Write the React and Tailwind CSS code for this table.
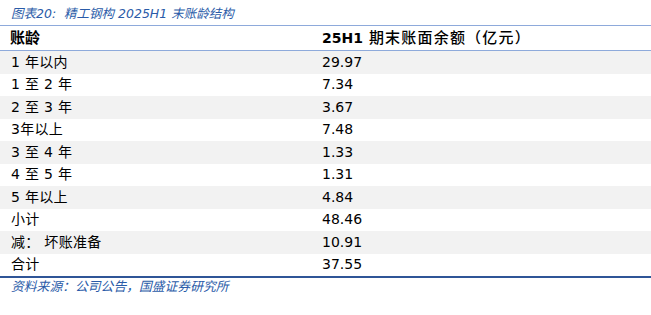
import React from 'react'

const rows = [
  ['1 年以内', '29.97'],
  ['1 至 2 年', '7.34'],
  ['2 至 3 年', '3.67'],
  ['3年以上', '7.48'],
  ['3 至 4 年', '1.33'],
  ['4 至 5 年', '1.31'],
  ['5 年以上', '4.84'],
  ['小计', '48.46'],
  ['减： 坏账准备', '10.91'],
  ['合计', '37.55'],
]

const font = { fontFamily: '"DejaVu Sans", "Noto Sans CJK SC", sans-serif' }

const App = () => {
  return (
    <div className="w-[651px] h-[315px] bg-white text-black" style={font}>
      <div className="h-[25px] pl-[11px] pt-[6px] text-[12.5px] leading-[15px] italic text-[#2a5ba8] whitespace-pre">
        图表20:  精工钢构 2025H1 末账龄结构
      </div>

      <div className="border-t-[1.5px] border-b-[1.5px] border-[#8eaadb] grid grid-cols-[311px_1fr] h-[26px] items-center text-[14px]">
        <div className="pl-[10px] font-bold text-[15px]">账龄</div>
        <div className="pl-[11px]">
          <span className="font-bold">25H1</span>
          <span className="font-medium text-[15px] tracking-[1.2px]"> 期末账面余额（亿元）</span>
        </div>
      </div>

      <div className="border-b-2 border-[#2f5597]">
        {rows.map(([label, value], i) => (
          <div
            key={label}
            className={`grid grid-cols-[311px_1fr] h-[22.5px] items-center text-[14px] ${
              i % 2 === 0 ? 'bg-[#f2f2f2]' : 'bg-white'
            }`}
          >
            <div className="pl-[11px] whitespace-pre tracking-[0.3px]">{label}</div>
            <div className="pl-[11px]">{value}</div>
          </div>
        ))}
      </div>

      <div className="pl-[11px] pt-[1px] text-[12.8px] leading-[15px] italic text-[#2a5ba8]">
        资料来源：公司公告，国盛证券研究所
      </div>
    </div>
  )
}

export default App
